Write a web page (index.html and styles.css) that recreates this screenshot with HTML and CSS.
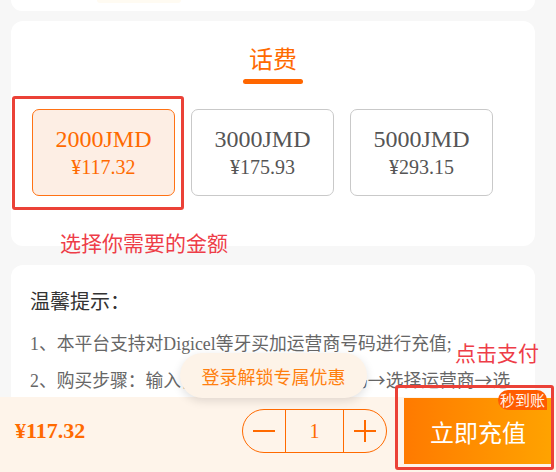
FILE: index.html
```html
<!DOCTYPE html>
<html lang="zh-CN">
<head>
<meta charset="utf-8">
<title>话费充值</title>
<link rel="stylesheet" href="styles.css">
</head>
<body>
  <div class="card card-top"><div class="top-glow"></div></div>

  <section class="card plans">
    <h2 class="plans-title">话费</h2>
    <div class="plans-bar"></div>
    <div class="options">
      <div class="option selected">
        <div class="amt">2000JMD</div>
        <div class="price">¥117.32</div>
      </div>
      <div class="option">
        <div class="amt">3000JMD</div>
        <div class="price">¥175.93</div>
      </div>
      <div class="option">
        <div class="amt">5000JMD</div>
        <div class="price">¥293.15</div>
      </div>
    </div>
  </section>

  <section class="card tips">
    <h3 class="tips-title">温馨提示：</h3>
    <p>1、本平台支持对Digicel等牙买加运营商号码进行充值;</p>
    <p>2、购买步骤：输入需要充值的7位手机号码<span class="arr">→</span>选择运营商<span class="arr">→</span>选择充值金额<span class="arr">→</span>点击支付</p>
  </section>

  <footer class="bar">
    <div class="total">¥117.32</div>
    <div class="stepper">
      <div class="step-btn">
        <svg width="24" height="24" viewBox="0 0 24 24"><path d="M1 12H23" stroke="#ff6a00" stroke-width="2" fill="none"/></svg>
      </div>
      <div class="step-qty">1</div>
      <div class="step-btn">
        <svg width="24" height="24" viewBox="0 0 24 24"><path d="M1 12H23M12 1V23" stroke="#ff6a00" stroke-width="2" fill="none"/></svg>
      </div>
    </div>
    <div class="pay-btn">立即充值<span class="badge">秒到账</span></div>
  </footer>

  <div class="login-pill">登录解锁专属优惠</div>

  <div class="mark mark-plan"></div>
  <div class="mark mark-pay"></div>
  <div class="note note-plan">选择你需要的金额</div>
  <div class="note note-pay">点击支付</div>
</body>
</html>
```

FILE: styles.css
```css
html, body {
  margin: 0;
  width: 556px;
  height: 472px;
  overflow: hidden;
}

body {
  position: relative;
  background: #f7f7f7;
  font-family: "Liberation Serif", "Noto Sans CJK SC", serif;
}

.card {
  background: #ffffff;
  margin-left: 11px;
  width: 524px;
  border-radius: 12px;
}

.card-top {
  height: 11px;
  border-radius: 0 0 12px 12px;
  display: flex;
}

.top-glow {
  margin-left: 86px;
  width: 84px;
  height: 3px;
  background: #fffbf2;
  border-radius: 0 0 40px 40px;
}

.plans {
  margin-top: 10px;
  height: 225px;
  padding-top: 22px;
  box-sizing: border-box;
  display: flex;
  flex-direction: column;
  align-items: center;
}

.plans-title {
  margin: 0;
  font-size: 24px;
  line-height: 30px;
  font-weight: normal;
  color: #ff6a00;
  font-family: "Noto Sans CJK SC", sans-serif;
}

.plans-bar {
  width: 60px;
  height: 5px;
  border-radius: 3px;
  background: #ff6600;
  margin-top: 6px;
}

.options {
  align-self: stretch;
  display: flex;
  gap: 16px;
  padding-left: 21px;
  margin-top: 25px;
}

.option {
  width: 143px;
  height: 87px;
  box-sizing: border-box;
  border: 1px solid #c9c9c9;
  border-radius: 7px;
  display: flex;
  flex-direction: column;
  align-items: center;
  justify-content: center;
  color: #555555;
}

.option.selected {
  border-color: #ff7214;
  background: #fdeee4;
  color: #ff6a00;
}

.amt {
  font-size: 24px;
  line-height: 28px;
}

.price {
  font-size: 20px;
  line-height: 28px;
}

.tips {
  margin-top: 19px;
  height: 207px;
  padding: 23px 19px 0;
  box-sizing: border-box;
  overflow: hidden;
}

.tips-title {
  margin: 0 0 11px;
  font-size: 20px;
  line-height: 28px;
  font-weight: normal;
  color: #333333;
}

.tips p {
  margin: 0;
  font-size: 17.8px;
  line-height: 35px;
  color: #666666;
}

.arr {
  font-family: "Noto Sans CJK SC", sans-serif;
}

.bar {
  position: absolute;
  left: 0;
  bottom: 0;
  width: 556px;
  height: 75px;
  box-sizing: border-box;
  padding: 0 4px 7px 15px;
  background: #fef4ea;
  display: flex;
  align-items: center;
  gap: 17px;
}

.total {
  flex: 1;
  color: #ff6a00;
  font-weight: bold;
  font-size: 22px;
}

.stepper {
  width: 145px;
  height: 44px;
  box-sizing: border-box;
  border: 1.5px solid #ff6a00;
  border-radius: 22px;
  display: flex;
}

.step-btn {
  width: 42px;
  display: flex;
  align-items: center;
  justify-content: center;
}

.step-qty {
  flex: 1;
  border-left: 1.5px solid #ff6a00;
  border-right: 1.5px solid #ff6a00;
  display: flex;
  align-items: center;
  justify-content: center;
  color: #ff6a00;
  font-size: 20px;
}

.pay-btn {
  position: relative;
  width: 148px;
  height: 66px;
  background: linear-gradient(90deg, #ff7a00, #ffa300);
  color: #ffffff;
  font-size: 24px;
  font-family: "Noto Sans CJK SC", sans-serif;
  display: flex;
  align-items: center;
  justify-content: center;
}

.badge {
  position: absolute;
  top: -8px;
  right: 5px;
  height: 20px;
  line-height: 20px;
  padding: 0 2px;
  font-size: 15px;
  background: #ff5c00;
  color: #fff3ea;
  border-radius: 10px 10px 0 10px;
}

.login-pill {
  position: absolute;
  left: 180px;
  top: 353px;
  width: 187px;
  height: 45px;
  border-radius: 23px;
  background: #fdf3e8;
  box-shadow: 0 3px 10px rgba(0, 0, 0, 0.12);
  color: #ff7f0f;
  font-size: 18px;
  font-family: "Noto Sans CJK SC", sans-serif;
  display: flex;
  align-items: center;
  justify-content: center;
}

.mark {
  position: absolute;
  box-sizing: border-box;
  border: 3px solid #eb4137;
  border-radius: 3px;
}

.mark-plan {
  left: 12px;
  top: 96px;
  width: 172px;
  height: 114px;
}

.mark-pay {
  left: 395px;
  top: 385px;
  width: 159px;
  height: 85px;
}

.note {
  position: absolute;
  color: #ee3d48;
  font-size: 21px;
  line-height: 24px;
  font-family: "Noto Sans CJK SC", sans-serif;
}

.note-plan {
  left: 60px;
  top: 230px;
}

.note-pay {
  left: 455px;
  top: 340px;
}
```
